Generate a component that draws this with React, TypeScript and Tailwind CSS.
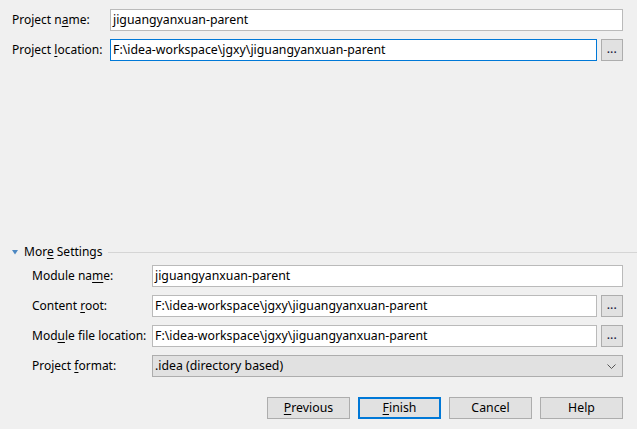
import React from 'react';

const font = { fontFamily: '"Noto Sans", "Liberation Sans", sans-serif' };

const Mn = ({ children }: { children: React.ReactNode }) => (
  <span className="underline underline-offset-2 decoration-1">{children}</span>
);

const TextField = ({ value, focused }: { value: string; focused?: boolean }) => (
  <div
    className={`flex-1 h-[22px] bg-white border flex items-center pl-[2px] text-[12.3px] text-black whitespace-nowrap overflow-hidden ${
      focused ? 'border-[#0078d7]' : 'border-[#bababa]'
    }`}
  >
    {value}
  </div>
);

const BrowseButton = () => (
  <div className="w-[22px] h-[22px] ml-[4px] bg-[#e1e1e1] border border-[#adadad] flex items-end justify-center pb-[6px]">
    <span className="text-[10px] leading-none font-bold text-[#202040] tracking-[0.5px]">...</span>
  </div>
);

const Row = ({ label, labelWidth, children }: { label: React.ReactNode; labelWidth: string; children: React.ReactNode }) => (
  <div className="flex items-center h-[22px]">
    <div className={`${labelWidth} text-[12px] text-black whitespace-nowrap`}>{label}</div>
    {children}
  </div>
);

const DialogButton = ({ children, primary }: { children: React.ReactNode; primary?: boolean }) => (
  <div
    className={`w-[83px] h-[22px] bg-[#e1e1e1] flex items-center justify-center text-[12.3px] text-black ${
      primary ? 'border-2 border-[#0078d7]' : 'border border-[#adadad]'
    }`}
  >
    {children}
  </div>
);

export default function App() {
  const path = 'F:\\idea-workspace\\jgxy\\jiguangyanxuan-parent';
  return (
    <div style={font} className="w-[637px] h-[429px] bg-[#f0f0f0] flex flex-col pt-[9px] pl-[12px] pr-[14px] pb-[10px]">
      <div className="flex flex-col gap-[8px]">
        <Row labelWidth="w-[98px]" label={<>Project n<Mn>a</Mn>me:</>}>
          <TextField value="jiguangyanxuan-parent" />
        </Row>
        <Row labelWidth="w-[98px]" label={<>Project <Mn>l</Mn>ocation:</>}>
          <TextField value={path} focused />
          <BrowseButton />
        </Row>
      </div>

      <div className="flex-1" />

      <div className="flex items-center h-[14px] mb-[6px]">
        <svg width="6" height="5" viewBox="0 0 6 5" className="ml-[0px] mr-[6px]">
          <polygon points="0,0 6,0 3,4.5" fill="#4d88c2" />
        </svg>
        <span className="text-[12px] text-black whitespace-nowrap">
          Mor<Mn>e</Mn> Settings
        </span>
        <div className="flex-1 h-px bg-[#d5d5d5] ml-[6px] mr-[-14px]" />
      </div>

      <div className="flex flex-col gap-[8px] pl-[20px]">
        <Row labelWidth="w-[120px]" label={<>Module na<Mn>m</Mn>e:</>}>
          <TextField value="jiguangyanxuan-parent" />
        </Row>
        <Row labelWidth="w-[120px]" label={<>Content <Mn>r</Mn>oot:</>}>
          <TextField value={path} />
          <BrowseButton />
        </Row>
        <Row labelWidth="w-[120px]" label={<>Mod<Mn>u</Mn>le file location:</>}>
          <TextField value={path} />
          <BrowseButton />
        </Row>
        <Row labelWidth="w-[120px]" label={<>Project <Mn>f</Mn>ormat:</>}>
          <div className="flex-1 h-[22px] bg-[#e1e1e1] border border-[#adadad] flex items-center justify-between pl-[2px] pr-[6px] text-[12.3px] text-black">
            <span>.idea (directory based)</span>
            <svg width="9" height="5" viewBox="0 0 9 5">
              <polyline points="0.5,0.5 4.5,4.5 8.5,0.5" fill="none" stroke="#555" strokeWidth="1" />
            </svg>
          </div>
        </Row>
      </div>

      <div className="flex justify-end gap-[8px] mt-[20px]">
        <DialogButton><Mn>P</Mn>revious</DialogButton>
        <DialogButton primary><Mn>F</Mn>inish</DialogButton>
        <DialogButton>Cancel</DialogButton>
        <DialogButton>Help</DialogButton>
      </div>
    </div>
  );
}
